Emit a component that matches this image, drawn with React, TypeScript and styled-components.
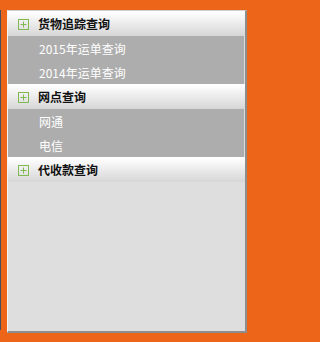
import React from "react";
import styled, { createGlobalStyle } from "styled-components";

const GlobalStyle = createGlobalStyle`
  html, body {
    margin: 0;
    padding: 0;
    background: #ec6519;
  }
  body {
    font-family: "Noto Sans CJK SC", "Noto Sans", sans-serif;
  }
`;

interface MenuGroup {
  title: string;
  items: string[];
}

const groups: MenuGroup[] = [
  { title: "货物追踪查询", items: ["2015年运单查询", "2014年运单查询"] },
  { title: "网点查询", items: ["网通", "电信"] },
  { title: "代收款查询", items: [] },
];

const PlusIcon = () => (
  <svg width="11" height="11" viewBox="0 0 11 11">
    <rect x="0.5" y="0.5" width="10" height="10" fill="none" stroke="#80b951" />
    <path d="M5.5 2.5v6M2.5 5.5h6" stroke="#80b951" strokeWidth="1" />
  </svg>
);

export default function App() {
  return (
    <>
      <GlobalStyle />
      <Page>
        <EdgeLine />
        <Panel>
          {groups.map((g) => (
            <Group key={g.title}>
              <Header>
                <PlusIcon />
                <HeaderTitle>{g.title}</HeaderTitle>
              </Header>
              {g.items.length > 0 && (
                <SubList>
                  {g.items.map((item) => (
                    <SubItem key={item}>{item}</SubItem>
                  ))}
                </SubList>
              )}
            </Group>
          ))}
        </Panel>
      </Page>
    </>
  );
}

const Page = styled.div`
  display: flex;
  align-items: flex-start;
  width: 267px;
  height: 342px;
  background: #ec6519;
`;

const EdgeLine = styled.div`
  width: 1px;
  height: 320px;
  margin-top: 10px;
  background: #45505e;
`;

const Panel = styled.div`
  display: flex;
  flex-direction: column;
  box-sizing: border-box;
  width: 240px;
  height: 323px;
  margin: 10px 0 0 6px;
  background: #dedede;
  border-top: 1px solid #cfcfcf;
  border-left: 1px solid #f4f4f4;
  border-right: 2px solid #8d8d8d;
  border-bottom: 2px solid #8d8d8d;
`;

const Group = styled.div`
  display: flex;
  flex-direction: column;
`;

const Header = styled.div`
  display: flex;
  align-items: center;
  gap: 9px;
  height: 24px;
  padding-left: 10px;
  border-top: 1px solid #ffffff;
  background: linear-gradient(#ffffff, #d6d6d6);
`;

const HeaderTitle = styled.span`
  font-size: 12px;
  font-weight: bold;
  color: #111111;
  line-height: 1;
`;

const SubList = styled.div`
  display: flex;
  flex-direction: column;
  background: #adadad;
  margin-right: 1px;
`;

const SubItem = styled.div`
  display: flex;
  align-items: center;
  height: 24px;
  padding-left: 31px;
  font-size: 12px;
  color: #ffffff;
`;
